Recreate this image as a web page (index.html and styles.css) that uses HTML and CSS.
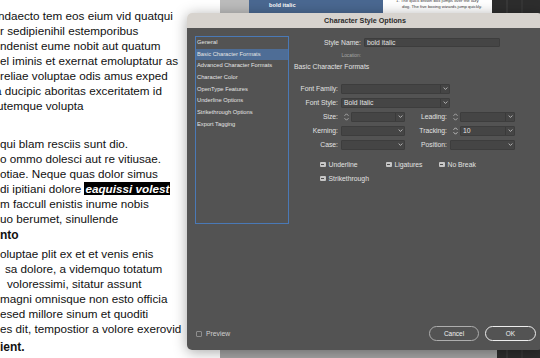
FILE: index.html
```html
<!DOCTYPE html>
<html lang="en">
<head>
    <meta charset="UTF-8">
    <meta name="viewport" content="width=device-width, initial-scale=1.0">
    <title>Character Style Options</title>
    <link rel="stylesheet" href="styles.css">
</head>
<body>
    <div class="screen">
        <div class="doc">
            <p>
                <span class="line out2">ndaecto tem eos eium vid quatqui</span>
                <span class="line">r sedipienihil estemporibus</span>
                <span class="line">ndenist eume nobit aut quatum</span>
                <span class="line">el iminis et exernat emoluptatur as</span>
                <span class="line">reliae voluptae odis amus exped</span>
                <span class="line out4">a ducipic aboritas exceritatem id</span>
                <span class="line out3">utemque volupta</span>
            </p>
            <p class="p2">
                <span class="line">qui blam resciis sunt dio.</span>
                <span class="line">o ommo dolesci aut re vitiusae.</span>
                <span class="line">otiae. Neque quas dolor simus</span>
                <span class="line">di ipitiani dolore <span class="mark">eaquissi volest</span></span>
                <span class="line">m faccull enistis inume nobis</span>
                <span class="line">uo berumet, sinullende</span>
            </p>
            <h4>nto</h4>
            <p class="p3">
                <span class="line">oluptae plit ex et et venis enis</span>
                <span class="line in5">sa dolore, a videmquo totatum</span>
                <span class="line in7">voloressimi, sitatur assunt</span>
                <span class="line">magni omnisque non esto officia</span>
                <span class="line">esed millore sinum et quoditi</span>
                <span class="line">es dit, tempostior a volore exerovid</span>
            </p>
            <h4 class="h-last">ient.</h4>
        </div>

        <div class="app">
            <div class="app-main">
                <div class="app-top">
                    <div class="tb-gray"></div>
                    <div class="tb-styles">bold italic</div>
                    <div class="tb-preview">
                        <p>1. The quick brown box jumps over the lazy dog. The five boxing wizards jump quickly.</p>
                    </div>
                    <div class="tb-dark"></div>
                </div>
            </div>
            <div class="app-side"></div>
        </div>

        <!-- floating dialog window -->
        <div class="dialog">
            <div class="dlg-title">Character Style Options</div>
            <div class="dlg-body">
                <div class="dlg-main">
                    <ul class="nav">
                        <li>General</li>
                        <li class="sel">Basic Character Formats</li>
                        <li>Advanced Character Formats</li>
                        <li>Character Color</li>
                        <li>OpenType Features</li>
                        <li>Underline Options</li>
                        <li>Strikethrough Options</li>
                        <li>Export Tagging</li>
                    </ul>

                    <div class="form">
                        <div class="row">
                            <span class="lbl">Style Name:</span>
                            <div class="box name-field"><span class="val">bold italic</span></div>
                        </div>
                        <div class="row loc-row">
                            <span class="lbl dim">Location:</span>
                        </div>
                        <div class="section">Basic Character Formats</div>

                        <div class="grid">
                            <span class="lbl">Font Family:</span>
                            <div class="box combo wide">
                                <span class="val"></span>
                                <span class="arr"><svg width="5" height="3" viewBox="0 0 5 3"><path d="M0.6 0.5 L2.5 2.4 L4.4 0.5" fill="none" stroke="#d0d0d0" stroke-width="0.8"/></svg></span>
                            </div>

                            <span class="lbl">Font Style:</span>
                            <div class="box combo wide">
                                <span class="val">Bold Italic</span>
                                <span class="arr"><svg width="5" height="3" viewBox="0 0 5 3"><path d="M0.6 0.5 L2.5 2.4 L4.4 0.5" fill="none" stroke="#d0d0d0" stroke-width="0.8"/></svg></span>
                            </div>

                            <span class="lbl">Size:</span>
                            <div class="spin">
                                <svg width="7" height="10" viewBox="0 0 7 10"><path d="M1.5 3.8 L3.5 1.8 L5.5 3.8 M1.5 6.2 L3.5 8.2 L5.5 6.2" fill="none" stroke="#bdbdbd" stroke-width="0.8"/></svg>
                                <div class="box combo">
                                    <span class="val"></span>
                                    <span class="arr"><svg width="5" height="3" viewBox="0 0 5 3"><path d="M0.6 0.5 L2.5 2.4 L4.4 0.5" fill="none" stroke="#d0d0d0" stroke-width="0.8"/></svg></span>
                                </div>
                            </div>
                            <span class="lbl">Leading:</span>
                            <div class="spin">
                                <svg width="7" height="10" viewBox="0 0 7 10"><path d="M1.5 3.8 L3.5 1.8 L5.5 3.8 M1.5 6.2 L3.5 8.2 L5.5 6.2" fill="none" stroke="#bdbdbd" stroke-width="0.8"/></svg>
                                <div class="box combo">
                                    <span class="val"></span>
                                    <span class="arr"><svg width="5" height="3" viewBox="0 0 5 3"><path d="M0.6 0.5 L2.5 2.4 L4.4 0.5" fill="none" stroke="#d0d0d0" stroke-width="0.8"/></svg></span>
                                </div>
                            </div>

                            <span class="lbl">Kerning:</span>
                            <div class="box">
                                <span class="val"></span>
                                <span class="arr"><svg width="5" height="3" viewBox="0 0 5 3"><path d="M0.6 0.5 L2.5 2.4 L4.4 0.5" fill="none" stroke="#d0d0d0" stroke-width="0.8"/></svg></span>
                            </div>
                            <span class="lbl">Tracking:</span>
                            <div class="spin">
                                <svg width="7" height="10" viewBox="0 0 7 10"><path d="M1.5 3.8 L3.5 1.8 L5.5 3.8 M1.5 6.2 L3.5 8.2 L5.5 6.2" fill="none" stroke="#d8d8d8" stroke-width="0.8"/></svg>
                                <div class="box combo">
                                    <span class="val">10</span>
                                    <span class="arr"><svg width="5" height="3" viewBox="0 0 5 3"><path d="M0.6 0.5 L2.5 2.4 L4.4 0.5" fill="none" stroke="#d0d0d0" stroke-width="0.8"/></svg></span>
                                </div>
                            </div>

                            <span class="lbl">Case:</span>
                            <div class="box">
                                <span class="val"></span>
                                <span class="arr"><svg width="5" height="3" viewBox="0 0 5 3"><path d="M0.6 0.5 L2.5 2.4 L4.4 0.5" fill="none" stroke="#d0d0d0" stroke-width="0.8"/></svg></span>
                            </div>
                            <span class="lbl">Position:</span>
                            <div class="box">
                                <span class="val"></span>
                                <span class="arr"><svg width="5" height="3" viewBox="0 0 5 3"><path d="M0.6 0.5 L2.5 2.4 L4.4 0.5" fill="none" stroke="#d0d0d0" stroke-width="0.8"/></svg></span>
                            </div>
                        </div>

                        <div class="checks">
                            <div class="check-row">
                                <span class="check w1"><span class="cb"></span>Underline</span>
                                <span class="check w2"><span class="cb"></span>Ligatures</span>
                                <span class="check"><span class="cb"></span>No Break</span>
                            </div>
                            <div class="check-row">
                                <span class="check"><span class="cb"></span>Strikethrough</span>
                            </div>
                        </div>
                    </div>
                </div>

                <div class="dlg-foot">
                    <span class="preview"><span class="cb-empty"></span>Preview</span>
                    <div class="buttons">
                        <button class="btn">Cancel</button>
                        <button class="btn ok">OK</button>
                    </div>
                </div>
            </div>
        </div>
    </div>
</body>
</html>
```

FILE: styles.css
```css
html, body {
    margin: 0;
}
body {
    width: 540px;
    height: 358px;
    overflow: hidden;
    background-color: #fff;
    font-family: "Liberation Sans", Arial, sans-serif;
}
.screen {
    position: relative;
    display: flex;
    width: 540px;
    height: 358px;
}

/* document page behind everything */
.doc {
    width: 220px;
    flex: none;
    overflow: hidden;
    box-sizing: border-box;
    padding-top: 7.5px;
    font-size: 11.7px;
    line-height: 15px;
    color: #111;
}
.doc p {
    margin: 0;
}
.doc .line {
    display: block;
    white-space: nowrap;
}
.doc .out2 { margin-left: -2px; }
.doc .out3 { margin-left: -3px; }
.doc .out4 { margin-left: -5px; }
.doc .in5 { padding-left: 5px; }
.doc .in7 { padding-left: 7px; }
.doc .p2 {
    margin-top: 23.3px;
}
.doc h4 {
    margin: 2.7px 0 0;
    font-size: 12px;
    line-height: 15px;
}
.doc .p3 {
    margin-top: 2.3px;
}
.doc .h-last {
    margin-top: 4.7px;
}
.mark {
    background-color: #000;
    color: #fff;
    font-weight: bold;
    font-style: italic;
    padding: 0 1px;
}

/* application window behind the dialog */
.app {
    flex: 1;
    display: flex;
}
.app-main {
    flex: 1;
    background-color: #a3a3a3;
}
.app-top {
    display: flex;
    height: 13px;
}
.tb-gray {
    width: 29px;
    background-color: #bcbcbc;
}
.tb-styles {
    width: 134px;
    box-sizing: border-box;
    padding-left: 20px;
    background-color: #4a6891;
    color: #fff;
    font-weight: bold;
    font-size: 5.7px;
    line-height: 10px;
}
.tb-preview {
    width: 109px;
    box-sizing: border-box;
    padding: 0 6px 0 19px;
    background-color: #fff;
    overflow: hidden;
}
.tb-preview p {
    margin: -2px 0 0;
    text-indent: -6px;
    font-size: 4.3px;
    line-height: 6px;
    color: #3a3a3a;
}
.tb-dark {
    flex: 1;
    background-color: #2d2d2d;
}
.app-side {
    width: 43px;
    background: linear-gradient(to right, #2d2d2d 0 9px, #383838 9px 11px, #2d2d2d 11px 24px, #353535 24px 26px, #2d2d2d 26px);
}

/* dialog */
.dialog {
    position: absolute;
    left: 187px;
    top: 13px;
    width: 356px;
    height: 337px;
    display: flex;
    flex-direction: column;
    border-radius: 5px;
    overflow: hidden;
    box-shadow: 0 2px 14px rgba(0, 0, 0, 0.35);
    font-size: 6.8px;
    color: #e2e2e2;
}
.dlg-title {
    height: 15px;
    flex: none;
    background-color: #d7d3ce;
    color: #2c2c2c;
    font-weight: bold;
    font-size: 7.2px;
    line-height: 15px;
    text-align: center;
}
.dlg-body {
    flex: 1;
    display: flex;
    flex-direction: column;
    padding: 8px 7px 9px 8px;
    background-color: #535353;
}
.dlg-main {
    flex: 1;
    display: flex;
    gap: 5px;
}
.nav {
    flex: none;
    width: 94px;
    height: 188px;
    box-sizing: border-box;
    margin: 0;
    padding: 0;
    list-style: none;
    border: 1px solid #4a79b6;
    font-size: 5.75px;
    color: #e4e4e4;
}
.nav li {
    height: 11.7px;
    line-height: 11.7px;
    padding-left: 1px;
    white-space: nowrap;
}
.nav .sel {
    background-color: #4e6d96;
}

.form {
    flex: 1;
    padding-top: 1px;
}
.row {
    display: flex;
    align-items: center;
    height: 10px;
}
.row .lbl {
    width: 67px;
    margin-right: 3px;
    text-align: right;
    white-space: nowrap;
}
.loc-row {
    margin-top: 3.7px;
}
.lbl.dim {
    font-size: 4.8px;
    color: #a6a6a6;
}
.section {
    margin-top: 1px;
    line-height: 10px;
    white-space: nowrap;
}

.grid {
    display: grid;
    grid-template-columns: 44px 64px 39px 65px;
    grid-auto-rows: 14px;
    column-gap: 3px;
    align-items: center;
    margin-top: 10.3px;
}
.grid .lbl {
    text-align: right;
    white-space: nowrap;
}
.box {
    display: flex;
    align-items: center;
    height: 10px;
    box-sizing: border-box;
    background-color: #454545;
    border: 1px solid #3d3d3d;
    border-radius: 1px;
    white-space: nowrap;
}
.box .val {
    flex: 1;
    padding-left: 2px;
}
.box .arr {
    display: flex;
    align-items: center;
    justify-content: center;
    width: 8px;
    height: 100%;
}
.box.combo .arr {
    border-left: 1px solid #3a3a3a;
}
.box.wide {
    grid-column: 2 / span 3;
    width: 109px;
}
.name-field {
    width: 136px;
    height: 9px;
}
.spin {
    display: flex;
    align-items: center;
    gap: 1px;
    margin-left: 2px;
}
.spin svg {
    flex: none;
}
.spin .box {
    flex: 1;
}

.checks {
    margin-top: 5.3px;
    padding-left: 26px;
}
.check-row {
    display: flex;
    align-items: center;
    height: 14px;
}
.check {
    display: flex;
    align-items: center;
    white-space: nowrap;
}
.check.w1 { width: 66px; }
.check.w2 { width: 53px; }
.cb {
    display: flex;
    align-items: center;
    justify-content: center;
    width: 5.5px;
    height: 5.5px;
    margin-right: 3px;
    border-radius: 1px;
    background-color: #c6c6c6;
}
.cb::after {
    content: "";
    width: 3px;
    height: 1px;
    background-color: #4e4e4e;
}

.dlg-foot {
    display: flex;
    align-items: center;
    justify-content: space-between;
    height: 15px;
}
.preview {
    display: flex;
    align-items: center;
    padding-left: 1px;
    color: #cfcfcf;
}
.cb-empty {
    width: 4px;
    height: 4px;
    margin-right: 4px;
    border: 1px solid #8e8e8e;
    border-radius: 1px;
}
.buttons {
    display: flex;
    gap: 6px;
}
.btn {
    width: 50px;
    height: 15px;
    padding: 0;
    border: 1px solid #adadad;
    border-radius: 8px;
    background: transparent;
    color: #f0f0f0;
    font-family: inherit;
    font-size: 6.5px;
}
.btn.ok {
    width: 51px;
    border: 1.5px solid #ededed;
}
```
